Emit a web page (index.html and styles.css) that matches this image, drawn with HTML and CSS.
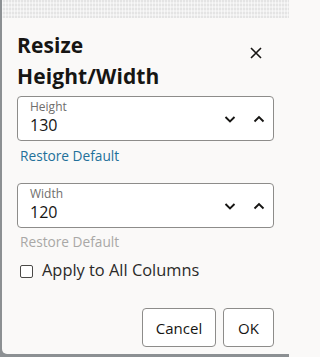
FILE: index.html
```html
<!DOCTYPE html>
<html lang="en">
<head>
<meta charset="utf-8">
<title>Resize Height/Width</title>
<link rel="stylesheet" href="styles.css">
</head>
<body>
<div class="screen">
  <div class="topstrip"></div>
  <div class="dialog">
    <div class="header">
      <h1 class="title">Resize<br>Height/Width</h1>
      <button class="close" aria-label="Close">
        <svg width="14" height="14" viewBox="0 0 14 14"><path d="M2 2 L12 12 M12 2 L2 12" stroke="#161513" stroke-width="1.6" fill="none"/></svg>
      </button>
    </div>

    <div class="field">
      <div class="field-text">
        <div class="label">Height</div>
        <div class="value">130</div>
      </div>
      <div class="spin">
        <svg width="14" height="10" viewBox="0 0 14 10"><path d="M2.5 3 L7 7.5 L11.5 3" stroke="#161513" stroke-width="1.9" fill="none"/></svg>
        <svg width="14" height="10" viewBox="0 0 14 10"><path d="M2.5 7.5 L7 3 L11.5 7.5" stroke="#161513" stroke-width="1.9" fill="none"/></svg>
      </div>
    </div>
    <div class="restore">Restore Default</div>

    <div class="field field-second">
      <div class="field-text">
        <div class="label">Width</div>
        <div class="value">120</div>
      </div>
      <div class="spin">
        <svg width="14" height="10" viewBox="0 0 14 10"><path d="M2.5 3 L7 7.5 L11.5 3" stroke="#161513" stroke-width="1.9" fill="none"/></svg>
        <svg width="14" height="10" viewBox="0 0 14 10"><path d="M2.5 7.5 L7 3 L11.5 7.5" stroke="#161513" stroke-width="1.9" fill="none"/></svg>
      </div>
    </div>
    <div class="restore restore-disabled">Restore Default</div>

    <label class="check">
      <span class="box"></span>
      <span class="check-text">Apply to All Columns</span>
    </label>

    <div class="footer">
      <button class="btn btn-cancel">Cancel</button>
      <button class="btn btn-ok">OK</button>
    </div>
  </div>
</div>
</body>
</html>
```

FILE: styles.css
```css
* { box-sizing: border-box; }
html {
  background: #faf9f8;
}
html, body {
  margin: 0;
  padding: 0;
}
body {
  width: 289px;
  height: 357px;
  overflow: hidden;
  background: #8c9093;
  font-family: "Open Sans", "Noto Sans", sans-serif;
  color: #161513;
}
.screen {
  margin-left: 2px;
  height: 354px;
  display: flex;
  flex-direction: column;
}
.topstrip {
  height: 18px;
  background-color: #ebebeb;
  background-image:
    repeating-linear-gradient(90deg, rgba(255,255,255,0.55) 0 1px, rgba(0,0,0,0) 1px 3px),
    repeating-linear-gradient(0deg, rgba(0,0,0,0.03) 0 2px, rgba(255,255,255,0.2) 2px 4px);
}
.dialog {
  flex: 1;
  background: #faf9f8;
  border-bottom-left-radius: 5px;
  padding: 12px 13px 0 15px;
  display: flex;
  flex-direction: column;
}
.header {
  display: flex;
  justify-content: space-between;
  align-items: flex-start;
}
.title {
  margin: 0;
  font-size: 21px;
  font-weight: 700;
  line-height: 31px;
  letter-spacing: 0.1px;
}
.close {
  border: 0;
  background: none;
  padding: 0;
  margin: 16px 13px 0 0;
  width: 14px;
  height: 14px;
  display: flex;
}
.field {
  margin-top: 4px;
  height: 45px;
  border: 1px solid #8d8c8a;
  border-radius: 4px;
  background: #fff;
  display: flex;
  justify-content: space-between;
  align-items: flex-start;
  padding: 2px 12px 0 12px;
  width: 257px;
}
.field-second { margin-top: 18px; }
.label {
  font-size: 12px;
  line-height: 16px;
  color: #6f6e6c;
}
.value {
  font-size: 16px;
  line-height: 20px;
}
.spin {
  display: flex;
  gap: 15px;
  margin-top: 15px;
  margin-right: -5px;
}
.restore {
  margin-top: 6px;
  margin-left: 3px;
  font-size: 13.7px;
  line-height: 18px;
  color: #22709a;
}
.restore-disabled {
  margin-top: 5px;
  color: #a9a8a6;
}
.check {
  margin-top: 9px;
  margin-left: 3px;
  display: flex;
  align-items: center;
  gap: 9px;
  height: 20px;
}
.box {
  width: 13px;
  height: 13px;
  border: 1.3px solid #4a4947;
  border-radius: 2px;
  background: #fff;
  margin-top: 2px;
}
.check-text {
  font-size: 16.4px;
  line-height: 20px;
  color: #2b2a28;
}
.footer {
  margin-top: 28px;
  display: flex;
  justify-content: flex-end;
  gap: 7px;
  width: 257px;
}
.btn {
  height: 39px;
  border: 1px solid #8d8c8a;
  border-radius: 4px;
  background: #fff;
  font-family: "Open Sans", "Noto Sans", sans-serif;
  font-size: 15px;
  color: #161513;
  padding: 0;
}
.btn-cancel { width: 74px; }
.btn-ok { width: 51px; }
```
